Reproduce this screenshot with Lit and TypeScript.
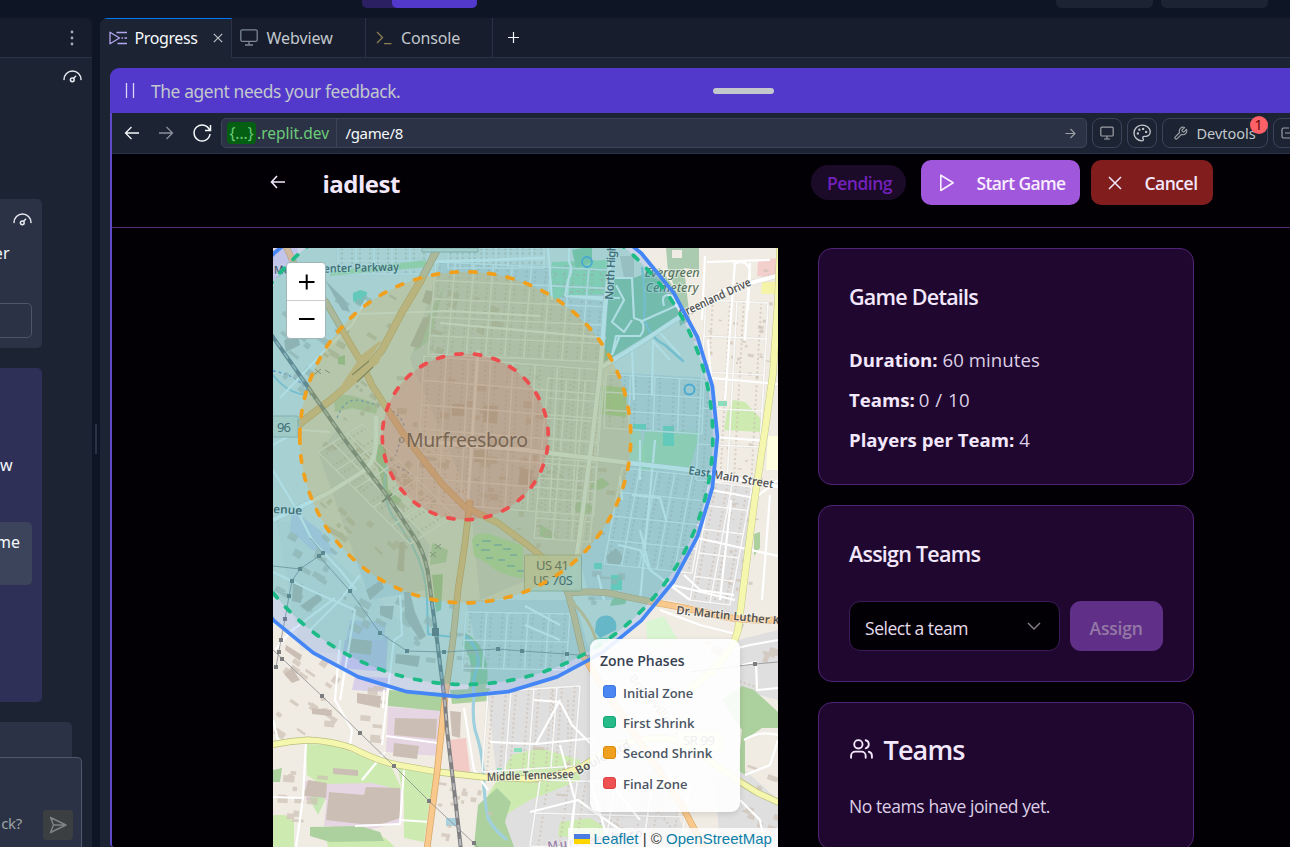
import { LitElement, html, svg, css } from "lit";
import { customElement } from "lit/decorators.js";

type Pt = [number, number];
type Grid = { o: Pt; u: Pt; v: Pt; n: number; m: number };

const rng = (seed: number) => () => {
  seed = (seed * 1664525 + 1013904223) % 4294967296;
  return seed / 4294967296;
};

/* Street blocks: origin, two edge vectors, number of streets along each. */
const grids: Grid[] = [
  { o: [436, 262], u: [172, 8], v: [-8, 92], n: 9, m: 5 },
  { o: [424, 356], u: [178, 14], v: [-8, 146], n: 8, m: 6 },
  { o: [548, 378], u: [56, 4], v: [-14, 160], n: 3, m: 8 },
  { o: [606, 374], u: [98, 6], v: [-2, 54], n: 4, m: 3 },
  { o: [622, 468], u: [88, 9], v: [-18, 96], n: 5, m: 4 },
  { o: [318, 452], u: [92, 92], v: [44, -28], n: 5, m: 3 },
  { o: [706, 300], u: [62, 3], v: [-10, 180], n: 2, m: 5 },
  { o: [712, 482], u: [40, 5], v: [-22, 118], n: 2, m: 5 },
  { o: [466, 612], u: [104, 2], v: [-4, 56], n: 5, m: 2 },
  { o: [488, 692], u: [92, -6], v: [-6, 80], n: 4, m: 1 },
  { o: [540, 780], u: [150, 4], v: [-10, 66], n: 4, m: 2 },
  { o: [338, 248], u: [90, 0], v: [0, 26], n: 5, m: 2 },
  { o: [448, 248], u: [96, 0], v: [0, 20], n: 8, m: 1 },
];

function gridPath(g: Grid) {
  let s = "";
  for (let i = 0; i <= g.n; i++) {
    const t = i / g.n;
    s += `M${g.o[0] + g.u[0] * t} ${g.o[1] + g.u[1] * t}l${g.v[0]} ${g.v[1]}`;
  }
  for (let j = 0; j <= g.m; j++) {
    const t = j / g.m;
    s += `M${g.o[0] + g.v[0] * t} ${g.o[1] + g.v[1] * t}l${g.u[0]} ${g.u[1]}`;
  }
  return s;
}

function housePath(g: Grid) {
  let s = "";
  for (let i = 0; i < g.n; i++) {
    for (const f of [0.22, 0.78]) {
      const t = (i + f) / g.n;
      s += `M${g.o[0] + g.u[0] * t} ${g.o[1] + g.u[1] * t}l${g.v[0]} ${g.v[1]}`;
    }
  }
  return s;
}

/* Scattered larger buildings: area x, y, w, h, count, size, rotation. */
const scatter: [number, number, number, number, number, number, number][] = [
  [276, 300, 60, 110, 16, 9, 38],
  [330, 290, 60, 60, 12, 7, 30],
  [425, 290, 70, 60, 12, 8, 20],
  [320, 440, 90, 110, 30, 7, 42],
  [276, 520, 70, 90, 14, 9, 30],
  [340, 590, 90, 50, 10, 10, 30],
  [276, 655, 60, 80, 16, 8, 35],
  [320, 680, 60, 60, 14, 9, 5],
  [276, 770, 50, 50, 14, 8, 4],
  [395, 370, 145, 130, 44, 8, 5],
  [340, 380, 40, 40, 8, 6, 35],
  [480, 450, 130, 100, 20, 6, 5],
  [585, 560, 60, 50, 6, 8, 4],
  [690, 260, 80, 120, 26, 4, 8],
  [720, 440, 40, 150, 22, 4, 8],
  [700, 620, 75, 40, 6, 9, 20],
  [742, 760, 36, 80, 12, 7, 20],
  [430, 780, 60, 65, 14, 6, 10],
  [516, 745, 60, 50, 8, 8, 5],
  [410, 600, 60, 70, 8, 8, 8],
];

function scatterPath() {
  const r = rng(17);
  let s = "";
  for (const [x, y, w, h, n, size, rot] of scatter) {
    const c = Math.cos((rot * Math.PI) / 180);
    const k = Math.sin((rot * Math.PI) / 180);
    for (let i = 0; i < n; i++) {
      const a = size * (0.5 + r());
      const b = size * (0.3 + r() * 0.6);
      s += `M${(x + r() * w).toFixed(1)} ${(y + r() * h).toFixed(1)}l${(a * c).toFixed(1)} ${(a * k).toFixed(1)}l${(-b * k).toFixed(1)} ${(b * c).toFixed(1)}l${(-a * c).toFixed(1)} ${(-a * k).toFixed(1)}z`;
    }
  }
  return s;
}

const initialZone = Array.from({ length: 32 }, (_, i) => {
  const a = (i * Math.PI) / 16;
  return `${(457.6 + 259.8 * Math.cos(a)).toFixed(1)},${(436.9 + 259.8 * Math.sin(a)).toFixed(1)}`;
}).join(" ");

const ring = (cx: number, cy: number, r: number) =>
  `M${cx - r} ${cy}a${r} ${r} 0 1 0 ${r * 2} 0a${r} ${r} 0 1 0 ${-r * 2} 0`;

const pylons: Pt[] = [
  [282, 659], [322, 696], [360, 733], [394, 766], [429, 801], [474, 843],
  [319, 556], [323, 553], [350, 591], [380, 633], [407, 651], [444, 652],
  [498, 649], [522, 651], [567, 654], [300, 569], [292, 581], [289, 596],
  [285, 619], [281, 640], [279, 652], [276, 667], [755, 664],
];

const US41 = "M283 240L298 272L326 302L345 335L361 362L372 385L386 407L402 432L418 453L442 484L465 507L498 523L525 543L540 555L555 572L568 593L575 620L583 655L602 686L640 742L682 806L704 847";
const NORTHWEST = "M437 250L420 282L402 312L382 350L365 370L332 399L298 425";
const CHURCH = "M470 500L465 543L458 590L453 640L445 697L437 773L427 849";
const RAIL = "M268 330L308 387L345 440L388 497L418 543Q427 560 429 580L432 603L437 640L445 703L447 730L455 797L461 850";
const MTB = "M270 745Q290 741 308 740Q332 741 352 748Q380 762 398 765L438 772L482 777L530 779Q565 775 583 766L610 748Q660 730 690 745L718 767L742 783L758 793L780 803";
const EASTSIDE = "M780 248L778 300L773 373L765 430L755 497L743 590L738 630Q733 650 715 668L690 690";
const MLK = "M568 593Q600 590 618 595L652 602L685 608L725 617Q745 621 780 620";

@customElement("zone-map")
class ZoneMap extends LitElement {
  static styles = css`
    :host {
      display: block;
      position: relative;
      width: 505px;
      height: 599px;
      overflow: hidden;
    }
    .tiles {
      display: block;
      width: 505px;
      height: 599px;
      font-family: "Noto Sans", sans-serif;
    }
    .zoom {
      position: absolute;
      left: 13px;
      top: 14px;
      width: 40px;
      height: 77px;
      box-sizing: border-box;
      background: #fff;
      border: 1px solid #9fb6b8;
      border-radius: 4px;
      display: flex;
      flex-direction: column;
    }
    .zoom svg {
      display: block;
      width: 38px;
      height: 37px;
    }
    .zoom svg + svg {
      border-top: 1px solid #ccc;
    }
    .legend {
      position: absolute;
      left: 317px;
      top: 391px;
      width: 150px;
      height: 173px;
      box-sizing: border-box;
      padding: 10px 10px;
      border-radius: 9px;
      background: rgba(255, 255, 255, 0.9);
      box-shadow: 0 2px 6px rgba(0, 0, 0, 0.12);
      font-family: "Open Sans", sans-serif;
      color: #4b5563;
    }
    .head {
      font-size: 14px;
      line-height: 24px;
      font-weight: 600;
      color: #374151;
      white-space: nowrap;
    }
    .row {
      display: flex;
      align-items: center;
      gap: 7.5px;
      height: 30.4px;
      padding-left: 3px;
      font-size: 13px;
      font-weight: 600;
      white-space: nowrap;
    }
    .row i {
      margin-bottom: 2px;
    }
    .rows {
      padding-top: 4.5px;
    }
    .sw {
      width: 12.5px;
      height: 12.5px;
      box-sizing: border-box;
      border: 1px solid;
      border-radius: 3px;
    }
    .blue { background: #4a87f2; border-color: #3b76e4; }
    .green { background: #25ba87; border-color: #12a674; }
    .amber { background: #efa01f; border-color: #d98b0c; }
    .red { background: #ee5152; border-color: #dd3f40; }
    .credit {
      position: absolute;
      right: 0;
      bottom: 0;
      width: 210.5px;
      height: 19px;
      padding: 2px 0 0 6.5px;
      box-sizing: border-box;
      background: rgba(255, 255, 255, 0.8);
      display: flex;
      align-items: center;
      font: 15px/17px "Liberation Sans", Arial, sans-serif;
      color: #333;
      white-space: pre;
    }
    .credit svg {
      width: 16px;
      height: 10px;
      margin-right: 3.5px;
      flex: none;
    }
    .link { color: #0e7fa8; }
  `;

  private map() {
    return svg`
      <g>
        <rect x="273" y="248" width="506" height="599" fill="#f0ece4"></rect>
        <!-- land use -->
        <g fill="#e0dfdf">
          <path d="M440 262L612 268L602 372L576 560L480 600L470 500L410 360z"></path>
          <path d="M608 372L712 378L718 480L690 600L590 600L580 560z"></path>
          <path d="M716 480L757 490L742 620L690 605L650 595z"></path>
          <path d="M466 600L575 600L600 690L660 760L690 850L505 850L488 700z"></path>
          <path d="M738 640L778 630V700L740 690zM745 770L778 800V847H720L715 780z"></path>
          <path d="M318 452L337 430L430 545L425 590L370 600z"></path>
          <path d="M276 520L300 525L420 640L400 660L300 650z" opacity=".4"></path>
        </g>
        <g fill="#e6d6e3">
          <path d="M388 707L442 710L438 756L386 752z"></path>
          <path d="M329 775L372 780L402 790L402 822L368 830L324 826z"></path>
          <path d="M345 640L388 636L386 672L340 668zM355 676L388 678L386 692L352 690z" fill="#d8cfe8"></path>
          <path d="M292 510L320 530L336 555L312 550L290 530z" fill="#dcd8ea"></path>
          <path d="M350 620L386 622L384 640L346 640z" fill="#dad6ea"></path>
          <path d="M304 781L330 781L328 800L306 800z"></path>
          <path d="M273 248H298L296 268L273 280z" fill="#e3d6e6"></path>
        </g>
        <path d="M448 740L466 738L470 772L450 774z" fill="#f3cbc6"></path>
        <path d="M758 260L779 258V278L757 276z" fill="#f3cfcc"></path>
        <path d="M646 622L664 616L678 640L648 650z" fill="#d9f5d2"></path>
        <path d="M762 282H779V294H761z" fill="#f4f3a8"></path>
        <path d="M768 436H779V470H766z" fill="#ffffe0"></path>
        <!-- green areas -->
        <g fill="#cdebb0">
          <path d="M600 385L627 388L626 417L599 414z" fill="#b9dc98"></path>
          <path d="M727 412L733 400L745 402L762 420L760 432L724 430z"></path>
          <path d="M306 744L330 745L352 752L370 760L392 768L402 790L372 783L320 784L307 775z"></path>
          <path d="M398 768L436 775L430 800L424 842L404 838L404 800z"></path>
          <path d="M273 815L285 815L294 822L294 847H273z"></path>
          <path d="M326 838L350 828L385 838L395 847H328z"></path>
          <path d="M512 755L540 748L580 760L580 780L530 800L505 815L488 795z"></path>
          <path d="M560 822L590 818L606 828L600 840L558 836z"></path>
          <path d="M315 784L325 800L318 815L310 800zM645 430L700 432L690 468L640 470z" fill="#c5e8b4"></path>
          <path d="M630 430L640 428L646 466L630 462z" opacity=".7"></path>
        </g>
        <g fill="#add19e">
          <path d="M388 690L444 693L441 711L388 706z"></path>
          <path d="M450 690L490 688L488 701L452 704z"></path>
          <path d="M310 827L360 826L380 832L384 841L330 842L310 836z"></path>
          <path d="M478 805L497 788L511 802L505 822L514 847H474z"></path>
          <path d="M742 686L754 690L778 712V728L762 728L745 740V775L738 770L742 730L722 700z"></path>
          <path d="M465 633Q480 640 486 660Q492 690 476 700L468 690Q476 660 462 645z"></path>
          <path d="M378 440L386 450L388 490L402 500L396 506L384 490L376 460z"></path>
          <path d="M432 575L443 574L441 610L436 612z"></path>
          <path d="M432 543L448 550L446 562L430 565z" opacity=".7"></path>
          <path d="M580 500L596 508L584 516L572 508z" opacity=".7"></path>
          <path d="M592 482L602 478L610 484L600 490L590 488z" opacity=".8"></path>
          <path d="M540 524L556 534L552 540L540 536z" opacity=".7"></path>
          <path d="M334 398Q345 392 360 398L378 404L376 414L352 408L335 412z" opacity=".6"></path>
          <path d="M338 357L345 355L345 365L338 364z"></path>
          <path d="M754 534L760 532L760 548L754 556z"></path>
          <path d="M273 770L282 768L280 782L273 782z"></path>
          <path d="M444 287L430 340L414 352L420 330z" opacity=".5"></path>
          <path d="M612 600L620 592L628 596L625 604L610 606z"></path>
        </g>
        <path d="M472 540Q476 531 490 534L523 546V578Q500 576 488 564L474 556z" fill="#c0eab2"></path>
        <path d="M482 541h9M476 545h3M494 545h8M503 549h8M481 550h9M510 555h7M486 558h7M498 560h7M507 566h8M517 571h7" stroke="#4f9fd0" stroke-width="1" fill="none"></path>
        <!-- park and cemetery -->
        <path d="M552 262L608 260L608 294L566 296L551 300L548 290z" fill="#b4e8b4"></path>
        <path d="M572 250L592 246L592 262L576 268z" fill="#9fd6a4"></path>
        <path d="M615 278L634 278L660 268L672 285L684 300L676 318L604 362L608 300z" fill="#a0cba8"></path>
        <path d="M666 248H699V270L684 268L690 320L680 326L676 290L668 272z" fill="#aacbaf"></path>
        <path d="M672 250h10v8h-10z" fill="#f0ece4"></path>
        <g stroke="#e2a5a5" stroke-width="1" fill="none" stroke-dasharray="3 4" opacity=".8">
          <path d="M555 275h40M556 284l30 3M570 292l36-3M558 268l20-5M600 272l4 20"></path>
        </g>
        <g fill="#88e0be">
          <path d="M663 426h11v20h-11zM353 293L360 290L367 292L366 302L360 305L353 301zM594 563h8v6h-8zM611 575h11v15h-11zM718 401h9v5h-9zM633 424h13v7h-13zM514 748h8v4h-8zM596 638h12v5h-12zM497 768h5v4h-5z"></path>
        </g>
        <path d="M596 622Q600 614 610 616Q618 620 616 630L600 638L595 632z" fill="#8cc5d2"></path>
        <!-- water -->
        <g fill="none" stroke="#a0d0de" stroke-linecap="round">
          <path d="M465 636Q480 648 478 665Q472 680 474 697Q472 715 475 730Q482 750 483 770Q484 800 488 818Q494 830 506 839" stroke-width="3.2"></path>
          <path d="M386 466L384 490Q388 512 396 520L412 545Q426 570 427 600L428 634L452 637" stroke-width="2"></path>
          <path d="M642 268Q646 300 644 318Q650 338 665 345L683 361" stroke-width="2.4"></path>
          <path d="M273 375Q286 392 305 395" stroke-width="1.6"></path>
        </g>
        <path d="M273 371Q292 374 303 385Q315 400 325 412M337 418Q345 396 362 401L385 407Q402 415 404 426L396 455Q385 462 400 468L414 476" fill="none" stroke="#6e97d8" stroke-width="1.3" stroke-dasharray="2.5 3"></path>
        <path d="M446 818h12v8h-12z" fill="#a9d0de"></path>
        <!-- houses -->
        <g fill="none" stroke="#cbbdb0" stroke-width="2" stroke-dasharray="2 2.6" opacity=".6">
          ${grids.map((g) => svg`<path d=${housePath(g)}></path>`)}
          <path d="M553 690V740M568 700V740M650 800l30 40M610 820l30 20M735 680l30 10"></path>
        </g>
        <path d=${scatterPath()} fill="#cdc0b4" opacity=".7"></path>
        <g fill="#cbbfb5">
          <path d="M395 718L437 719L436 739L394 735zM394 743L419 746L417 759L393 756zM357 693L381 696L380 708L357 703zM450 711L461 712L460 738L452 736z"></path>
          <path d="M329 792L364 795L366 787L400 788L400 818L382 824L360 824L326 820z"></path>
          <path d="M312 708L332 710L331 716L312 714zM333 768L358 770L358 776L333 774zM308 780L327 783L326 798L304 796z"></path>
          <path d="M348 638L372 641L371 655L347 652zM396 654L420 656L418 667L395 663zM404 592L410 592L415 612L426 636L420 640L405 618z"></path>
          <path d="M366 590L381 580L384 588L370 600zM300 606L320 592L322 600L308 612zM293 583L303 584L301 603L292 601zM380 606L394 606L392 620L380 615z"></path>
          <path d="M423 318L431 316L420 348L410 346zM426 290L434 292L430 305L422 302zM400 542L405 542L404 572L397 570zM284 340L298 335L300 345L286 352z"></path>
          <path d="M325 280L345 300L350 312L342 310z"></path>
          <path d="M484 405L498 406L497 424L483 422zM452 404h12v12h-12zM474 450h14v12h-14zM520 468L533 470L530 488L518 486z"></path>
          <path d="M606 556L616 548L624 558L618 566L608 564zM284 674L292 668L300 680L292 683zM286 645L302 655L300 661L285 650z"></path>
          <path d="M620 256h14v22h-10z" opacity=".6"></path>
        </g>
        <!-- minor streets -->
        <g fill="none" stroke="#cfcac4" stroke-width="2.6" opacity=".4">
          ${grids.map((g) => svg`<path d=${gridPath(g)}></path>`)}
        </g>
        <g fill="none" stroke="#fff" stroke-width="1.7" opacity=".82">
          ${grids.map((g) => svg`<path d=${gridPath(g)}></path>`)}
        </g>
        <g fill="none" stroke="#fff" stroke-width="2.2" stroke-linejoin="round">
          <path d="M356 314L448 311L540 316M440 323L606 338M280 398L330 345L352 325L366 300"></path>
          <path d="M273 445L300 430L330 432M273 470L298 512L312 540L340 570L356 590"></path>
          <path d="M273 572L310 590L355 610L350 640L340 700M310 630L340 600L360 575M400 595L402 635L394 640L388 690L382 745"></path>
          <path d="M275 650L290 632L335 598M273 797L303 798L296 847M306 742L303 798M340 640L335 700L352 730L350 745L330 745"></path>
          <path d="M355 826L400 824L404 770M400 820L430 822M386 736L438 743M385 752L362 780M273 720L278 740M384 690L383 708"></path>
          <path d="M464 708L474 770L488 790M490 742L536 744L560 700M534 700L560 702L572 725L592 745M536 744L595 738"></path>
          <path d="M560 745L575 800L570 847M590 780L610 847M530 812L578 800L620 830L650 838M616 790L640 820"></path>
          <path d="M730 650L750 645L778 640M742 665L756 662L757 690L778 688M745 775L770 765L778 740M740 800L760 820L765 847M744 740Q760 730 778 735"></path>
          <path d="M640 530L650 570L690 600M684 575L700 590L734 595M672 585L735 600M660 610L700 625L740 635M640 440V480M655 440L640 600"></path>
          <path d="M705 256L702 320M735 262L731 315L725 400M750 263L745 340M707 262L770 260M733 264Q748 258 750 272L748 310"></path>
          <path d="M708 340L711 378L778 384M715 437L765 441M731 500L720 600M711 490L755 498L778 480M697 538L778 556M770 495L762 600"></path>
          <path d="M620 476L622 500M632 495L660 498L666 520M618 545L640 550L650 570M598 575L604 600M525 606L560 625M525 625L560 640"></path>
          <path d="M569 248L569 262Q574 270 568 280L565 296M565 296L606 300M570 296L620 298M548 248L552 300"></path>
          <path d="M615 278H632L634 318L642 321Q646 330 640 336H616L612 355M616 285L624 300L612 322L624 332L632 320M640 322L680 304M664 306Q660 292 672 296L680 312M612 355L620 335"></path>
          <path d="M660 333L680 355M652 340L670 360M632 350L634 400M653 340L652 395"></path>
        </g>
        <!-- larger streets -->
        <g fill="none" stroke="#cfcac4" stroke-width="5.4" opacity=".6">
          <path d="M612 248L605 307L600 373L592 440L578 547L570 600"></path>
          <path d="M602 367L642 342L675 320L725 290L780 275"></path>
          <path d="M408 440L525 450L630 463L690 470L780 487"></path>
          <path d="M273 520L298 508L330 492L362 472"></path>
        </g>
        <g fill="none" stroke="#fff" stroke-width="4.4">
          <path d="M612 248L605 307L600 373L592 440L578 547L570 600"></path>
          <path d="M602 367L642 342L675 320L725 290L780 275"></path>
          <path d="M408 440L525 450L630 463L690 470L780 487"></path>
          <path d="M478 350L468 500" stroke-width="3"></path>
          <path d="M273 520L298 508L330 492L362 472Q376 462 376 440L376 416"></path>
          <path d="M316 273L428 262L545 258" stroke-width="3"></path>
        </g>
        <path d="M330 271L426 260V267L330 276z" fill="#c8e8a8"></path>
        <!-- arterials -->
        <g fill="none" stroke-linejoin="round">
          <g stroke="#b8bf7e">
            <path d=${MTB} stroke-width="6.8"></path>
            <path d=${EASTSIDE} stroke-width="7.2"></path>
          </g>
          <g stroke="#f6f7ae">
            <path d=${MTB} stroke-width="5.4"></path>
            <path d=${EASTSIDE} stroke-width="6.4"></path>
          </g>
          <g stroke="#d6a566">
            <path d=${US41} stroke-width="6.6"></path>
            <path d=${NORTHWEST} stroke-width="7.6"></path>
            <path d=${CHURCH} stroke-width="6.6"></path>
            <path d=${MLK} stroke-width="6.8"></path>
          </g>
          <g stroke="#f8c88c">
            <path d=${US41} stroke-width="5.4"></path>
            <path d=${NORTHWEST} stroke-width="6.4"></path>
            <path d=${CHURCH} stroke-width="5.2"></path>
            <path d=${MLK} stroke-width="5.6"></path>
            <path d="M388 336L376 362L366 373L345 385L330 400L344 392L378 362zM338 392L366 362L380 342L362 356z" fill="#f8c88c" stroke-width="2"></path>
          </g>
          <path d="M568 593L575 605Q590 620 596 640" stroke="#f8c88c" stroke-width="3"></path>
          <path d="M352 375L369 361M357 382L373 367" stroke="#8b7550" stroke-width="1.2"></path>
        </g>
        <!-- railway -->
        <g fill="none">
          <path d=${RAIL} stroke="#808083" stroke-width="4"></path>
          <path d=${RAIL} stroke="#b9b9b9" stroke-width="2" stroke-dasharray="7 7"></path>
          <path d="M382 502L392 494" stroke="#777" stroke-width="2"></path>
          <path d="M432 628h7v8h-7z" fill="#777"></path>
        </g>
        <!-- power lines -->
        <g fill="none" stroke="#8a8a8c" stroke-width=".9" opacity=".85">
          <path d="M273 650L322 696L360 733L394 766L429 801L478 847M300 569L319 556L350 591L380 633L407 651L444 652L498 649L522 651L567 654L590 656"></path>
          <path d="M319 556L323 553L310 538M273 566L300 569L292 581L289 596L285 619L281 640L276 667M690 672L755 664L778 662"></path>
        </g>
        <g fill="#7a7c7e">
          ${pylons.map(([x, y]) => svg`<rect x=${x - 2} y=${y - 2} width="4" height="4"></rect>`)}
        </g>
        <path d="M315 369l6 5m0-5l-6 5M435 544l6 5m0-5l-6 5M430 552l6 5m0-5l-6 5M325 370l5 3" stroke="#888" stroke-width="1" fill="none"></path>
        <g fill="none" stroke="#5db0e0" stroke-width="1.8">
          <circle cx="587" cy="262" r="5"></circle>
          <circle cx="689.500" cy="389.500" r="5"></circle>
        </g>
        <!-- labels -->
        <g fill="#555" stroke="#fff" stroke-opacity=".5" stroke-width="2" paint-order="stroke" font-size="11.600" font-weight="600">
          <text transform="translate(274 274) rotate(-1.500)" textLength="125" lengthAdjust="spacingAndGlyphs">Medical Center Parkway</text>
          <text transform="translate(613 300) rotate(-87)" textLength="56">North High</text>
          <text transform="translate(681 318) rotate(-25)" textLength="78" lengthAdjust="spacingAndGlyphs">Greenland Drive</text>
          <text transform="translate(688 474) rotate(9.500)" textLength="86" lengthAdjust="spacingAndGlyphs">East Main Street</text>
          <text transform="translate(676 614) rotate(6)" textLength="104" lengthAdjust="spacingAndGlyphs">Dr. Martin Luther K</text>
          <text transform="translate(273 513) rotate(3)" textLength="29" lengthAdjust="spacingAndGlyphs">enue</text>
          <text transform="translate(487 781) rotate(-2)" textLength="87" lengthAdjust="spacingAndGlyphs">Middle Tennessee</text>
          <text transform="translate(578 775) rotate(-28)" textLength="60">Boulevard</text>
          <text transform="translate(628 678) rotate(50)" textLength="90" opacity=".5" lengthAdjust="spacingAndGlyphs">Bradyville Pike</text>
          <text transform="translate(548 850) rotate(-8)" textLength="96" fill="#8a6d9c" opacity=".8">Murfreesboro</text>
          <g font-style="italic" font-weight="500" fill="#5b7560" font-size="12.500">
            <text x="644.500" y="277" textLength="55">Evergreen</text>
            <text x="645.500" y="292" textLength="53">Cemetery</text>
          </g>
        </g>
        <g font-size="13" fill="#555">
          <path d="M422 248h56v4h-56z" fill="#e9e6d4" stroke="#b5b5a5"></path>
          <rect x="266" y="416" width="32" height="21" rx="1" fill="#e5e3cf" stroke="#b5b5a5" opacity=".9"></rect>
          <text x="277" y="431.500" textLength="14">96</text>
          <rect x="524.500" y="555" width="57" height="36" rx="1" fill="#eee0b4" stroke="#b5b08a" opacity=".85"></rect>
          <text x="536" y="570" textLength="33">US 41</text>
          <text x="533" y="585" textLength="40">US 70S</text>
          <rect x="677" y="730" width="45" height="21" fill="#f1efd5" stroke="#ccc"></rect>
          <text x="683" y="745" textLength="32">SR 99</text>
        </g>
        <text x="406" y="447" font-size="19.500" textLength="122" fill="#3c3c3c" stroke="#fff" stroke-opacity=".35" stroke-width="2" paint-order="stroke">Murfreesboro</text>
        <circle cx="401.500" cy="440" r="2.500" fill="none" stroke="#777"></circle>
        <!-- play zones -->
        <g fill-opacity=".2" stroke-width="3.750" stroke-linecap="round" stroke-linejoin="round">
          <polygon points=${initialZone} fill="#3b82f6" stroke="#4486f5"></polygon>
          <g stroke-dasharray="6.25 12.5">
            <path d=${ring(465.3, 437, 247.5)} fill="#10b981" stroke="#1dbb87"></path>
            <path d=${ring(465.3, 437.3, 165.5)} fill="#f59e0b" stroke="#f0a01c"></path>
            <path d=${ring(465.3, 436.7, 83)} fill="#ef4444" stroke="#ee4d4d"></path>
          </g>
        </g>
      </g>
    `;
  }

  render() {
    return html`
      <svg class="tiles" viewBox="273 248 505 599">${this.map()}</svg>
      <div class="zoom">
        <svg viewBox="0 0 38 37"><path d="M12 19h15.500M19.700 11.500v15" stroke="#000" stroke-width="2"></path></svg>
        <svg viewBox="0 0 38 37"><path d="M12 18h15.500" stroke="#000" stroke-width="2"></path></svg>
      </div>
      <div class="legend">
        <div class="head">Zone Phases</div>
        <div class="rows">
          <div class="row"><i class="sw blue"></i><span>Initial Zone</span></div>
          <div class="row"><i class="sw green"></i><span>First Shrink</span></div>
          <div class="row"><i class="sw amber"></i><span>Second Shrink</span></div>
          <div class="row"><i class="sw red"></i><span>Final Zone</span></div>
        </div>
      </div>
      <div class="credit">
        <svg viewBox="0 0 16 10"><path d="M0 0h16v5H0z" fill="#4c7be1"></path><path d="M0 5h16v5H0z" fill="#ffd500"></path></svg><span class="link">Leaflet</span><span> | © </span><span class="link">OpenStreetMap</span>
      </div>
    `;
  }
}

const gauge = html`<svg width="19" height="14" viewBox="0 0 19 14" fill="none" stroke="#e6e9ee" stroke-width="1.500" stroke-linecap="round"><path d="M1 9.500A8.300 8.300 0 0 1 18 9.500"></path><circle cx="9.300" cy="9.800" r="1.900"></circle><path d="M10.600 8.300L12.600 6.200"></path></svg>`;

@customElement("app-root")
class AppRoot extends LitElement {
  static styles = css`
    :host {
      display: block;
      width: 1290px;
      height: 847px;
      overflow: hidden;
      background: #0e1525;
      color: #f5f9fc;
      font-family: "Noto Sans", sans-serif;
      font-size: 16px;
    }
    * { box-sizing: border-box; }
    svg { display: block; flex: none; }
    span { white-space: nowrap; }
    .top {
      height: 18px;
      display: flex;
      align-items: flex-start;
      padding-left: 362px;
    }
    .seg { width: 115px; height: 8px; background: #2a2062; border-radius: 0 0 5px 5px; padding-left: 30px; }
    .seg i { display: block; height: 8px; background: #5239cc; border-radius: 0 0 5px 5px; }
    .pill { height: 8px; background: #1c2333; border-radius: 0 0 5px 5px; }
    .p1 { width: 97px; margin-left: 579px; }
    .p2 { width: 107px; margin-left: 8px; }
    .body { display: flex; height: 829px; }

    .chat {
      width: 92px;
      background: #1c2333;
      border-radius: 0 8px 0 0;
      overflow: hidden;
      display: flex;
      flex-direction: column;
    }
    .chathead {
      height: 40px;
      flex: none;
      background: #171d2c;
      border-bottom: 1px solid #2b3245;
      display: flex;
      justify-content: flex-end;
      padding: 12px 18px 0 0;
    }
    .gaugebox { height: 141px; flex: none; display: flex; justify-content: flex-end; padding: 12px 10.5px 0 0; }
    .card1 {
      width: 42px; height: 149px; flex: none; background: #2b3245; border-radius: 0 5px 5px 0;
      display: flex; flex-direction: column; align-items: flex-end; padding-top: 14px; padding-right: 10.5px;
    }
    .card1 .er { margin: 12px 22px 0 0; line-height: 28px; }
    .field { width: 32px; height: 35px; border: 1px solid #4e5569; border-left: 0; border-radius: 0 5px 5px 0; margin-top: 36px; margin-right: -0.5px; }
    .card2 {
      width: 42px; height: 334px; flex: none; margin-top: 20px; background: #2f3057; border-radius: 0 5px 5px 0;
      display: flex; flex-direction: column; align-items: flex-start; padding-top: 83px;
    }
    .card2 .w { width: 12.5px; display: flex; justify-content: flex-end; line-height: 28px; }
    .quote { width: 32px; height: 63px; background: #3c445c; border-radius: 0 5px 5px 0; margin-top: 43px; display: flex; justify-content: flex-end; padding: 6px 12px 0 0; line-height: 28px; }
    .card3 { width: 72px; height: 35px; flex: none; margin-top: 20px; background: #2b3245; border-radius: 0 5px 0 0; }
    .compose {
      width: 82px; height: 92px; flex: none; background: #2b3245; border: 1px solid #51586b; border-width: 1px 1px 0 0;
      border-radius: 0 5px 0 0; display: flex; justify-content: flex-end; align-items: flex-start; gap: 21px; padding: 52px 8px 0 0;
    }
    .compose span { color: #9da2a6; font-size: 15px; line-height: 27px; letter-spacing: -0.3px; }
    .send { width: 30px; height: 30px; border-radius: 4px; background: #3c3f41; display: grid; place-items: center; flex: none; }

    .gutter { width: 8px; display: flex; align-items: center; padding: 12px 0 0 3px; }
    .gutter i { width: 2px; height: 30px; background: #2b3245; }

    .pane {
      width: 1190px;
      background: #1c2333;
      border-radius: 8px 0 0 0;
      overflow: hidden;
      display: flex;
      flex-direction: column;
    }
    .tabs { height: 40px; flex: none; display: flex; background: #171d2c; }
    .tab { height: 40px; display: flex; align-items: center; border-right: 1px solid #2b3245; border-bottom: 1px solid #2b3245; color: #c2c8cc; }
    .active { width: 132px; background: #1c2333; border-top: 1px solid #0079f2; border-bottom: 0; color: #f5f9fc; padding: 0 0 1px 9px; }
    .tab2 { width: 134px; padding-left: 8px; }
    .tab3 { width: 127px; padding-left: 10px; }
    .tab4 { flex: 1; border-right: 0; padding-left: 15px; }
    .active span { width: 63px; margin: 0 15.5px 0 6.5px; letter-spacing: -0.4px; }
    .tab2 span { margin-left: 8.5px; letter-spacing: -0.05px; }
    .tab3 span { margin-left: 9px; letter-spacing: -0.17px; }

    .frame { margin: 10px 0 0 10px; height: 779px; flex: none; display: flex; flex-direction: column; }
    .banner {
      height: 45px; flex: none; background: #5239cc; border-radius: 9px 0 0 0; display: flex; align-items: center;
      color: #c2c8cc; font-size: 17.4px; padding-left: 15px;
    }
    .banner span { margin-left: 16px; width: 249px; letter-spacing: -0.4px; }
    .grip { width: 61px; height: 6px; border-radius: 3px; background: #c2c8cc; margin-left: 312.5px; }
    .web { height: 734px; border-left: 2px solid #5f4bc9; display: flex; flex-direction: column; border-radius: 0 0 0 4px; overflow: hidden; }
    .bar { height: 41px; flex: none; background: #1c2333; border-bottom: 1px solid #2b3245; display: flex; align-items: center; padding-left: 10.5px; width: 1200px; }
    .bar > svg { margin-right: 16px; }
    .bar > .fwd { margin-right: 17px; }
    .url {
      width: 866px; height: 30px; flex: none; background: #2b3245; border: 1px solid #3c445c; border-radius: 5px;
      display: flex; align-items: center; font-size: 15.5px; margin-left: -7px;
    }
    .host { width: 115px; height: 28px; flex: none; border-right: 1px solid #3c445c; display: flex; align-items: center; padding-left: 5.5px; color: #6bcb77; }
    .dots { width: 29px; height: 22px; background: #045f12; border-radius: 4px; display: flex; align-items: center; justify-content: center; flex: none; }
    .host .r { margin-left: 1px; }
    .url .path { margin-left: 9px; width: 57px; font-size: 15px; letter-spacing: -0.35px; padding-bottom: 1px; }
    .url > svg { margin-left: 662px; }
    .btn { height: 30px; width: 30px; flex: none; border: 1px solid #3c445c; border-radius: 8px; display: flex; align-items: center; justify-content: center; margin-left: 5px; position: relative; color: #c2c8cc; }
    .dev { width: 106px; justify-content: flex-start; padding-left: 10.5px; font-size: 14.5px; }
    .dev span { margin-left: 8.5px; padding-bottom: 1px; }
    .badge {
      position: absolute; right: -1px; top: -3px; width: 18px; height: 18px; border-radius: 9px; background: #ff6166;
      color: #590a0c; font-size: 14px; line-height: 18px; text-align: center;
    }

    .app {
      flex: 1; background: #020005; font-family: "Open Sans", sans-serif; color: #f3e8fb;
    }
    .header { height: 74px; border-bottom: 1px solid #54297c; display: flex; align-items: center; padding: 0 0 16px 158px; }
    .header > svg { margin-bottom: 2px; }
    .title { font-size: 24px; font-weight: 700; margin-left: 36.5px; width: 77px; letter-spacing: -0.5px; padding-top: 1px; }
    .pending { width: 95px; height: 35px; border-radius: 18px; background: #1b0b29; color: #7321bb; font-size: 17.5px; font-weight: 600; letter-spacing: -0.5px; display: flex; align-items: center; padding-left: 16px; margin-left: 411.5px; padding-top: 1px; }
    .act { height: 45px; border-radius: 10px; display: flex; align-items: center; font-size: 17.5px; font-weight: 600; }
    .act span { padding-top: 1px; }
    .start { width: 159px; background: #a057dc; margin-left: 15px; padding-left: 17px; color: #f8eefe; letter-spacing: -0.64px; }
    .act span { margin-left: 20.5px; }
    .cancel { width: 122.5px; background: #811d1d; margin-left: 10.5px; padding-left: 15.5px; letter-spacing: -0.5px; }
    .main { display: flex; gap: 40px; padding: 20px 0 0 161px; }
    .side { width: 375.5px; display: flex; flex-direction: column; gap: 20px; }
    .card { border: 1px solid #4f2476; border-radius: 14px; background: #200730; padding: 32px 30px 0; }
    .c1 { height: 237px; }
    .c2 { height: 177px; }
    .c3 { height: 148px; padding-top: 30px; }
    .h { font-size: 21.5px; font-weight: 600; line-height: 32px; height: 32px; letter-spacing: -0.76px; }
    .facts { padding-top: 27px; font-size: 18.6px; line-height: 40px; color: #ddd0e6; }
    .facts b { color: #f3e8fb; font-weight: 700; }
    .facts div { display: flex; gap: 5px; }
    .facts .d { letter-spacing: 0.08px; }
    .facts .sp { letter-spacing: 0.5px; margin-left: -1px; }
    .form { display: flex; gap: 10px; padding-top: 31px; }
    .select { width: 211px; height: 50px; border: 1px solid #3a1a5a; border-radius: 11px; background: #020005; display: flex; align-items: center; justify-content: space-between; padding: 0 18px 0 15px; font-size: 17.5px; color: #e6dcec; letter-spacing: -0.47px; }
    .select span, .assign span { padding-top: 3px; }
    .assign { width: 93px; height: 50px; border-radius: 11px; background: #602f87; color: #9478a6; font-size: 17.5px; font-weight: 600; letter-spacing: -0.2px; display: flex; align-items: center; justify-content: center; }
    .big { display: flex; align-items: center; gap: 9.5px; height: 32px; font-size: 27px; font-weight: 600; letter-spacing: -0.85px; }
    .none { padding-top: 26px; font-size: 17.5px; line-height: 30px; color: #ddd0e6; letter-spacing: -0.41px; }
  `;

  render() {
    return html`
      <div class="top">
        <div class="seg"><i></i></div>
        <div class="pill p1"></div>
        <div class="pill p2"></div>
      </div>
      <div class="body">
        <div class="chat">
          <div class="chathead">
            <svg width="4" height="16" viewBox="0 0 4 16" fill="#a4abb3"><circle cx="2" cy="2" r="1.400"></circle><circle cx="2" cy="8" r="1.400"></circle><circle cx="2" cy="14" r="1.400"></circle></svg>
          </div>
          <div class="gaugebox">${gauge}</div>
          <div class="card1">${gauge}<span class="er">er</span><div class="field"></div></div>
          <div class="card2"><span class="w">w</span><div class="quote"><span>me</span></div></div>
          <div class="card3"></div>
          <div class="compose">
            <span>ck?</span>
            <div class="send"><svg width="18" height="18" viewBox="0 0 18 18" fill="none" stroke="#7f8385" stroke-width="1.400" stroke-linejoin="round"><path d="M1.500 1.500L17 9L1.500 16.500L4.500 9zM4.500 9H17"></path></svg></div>
          </div>
        </div>
        <div class="gutter"><i></i></div>
        <div class="pane">
          <div class="tabs">
            <div class="tab active">
              <svg width="19" height="14" viewBox="0 0 19 14" fill="none" stroke="#b5a6f2" stroke-width="1.300" stroke-linejoin="round"><path d="M1 1.200V12.800L10.500 7zM7.500 1.500H18M12.500 7H14M15.500 7H18M8.500 12.500H18"></path></svg>
              <span>Progress</span>
              <svg width="10" height="10" viewBox="0 0 10 10" stroke="#c2c8cc" stroke-width="1.100"><path d="M.8.800L9.200 9.200M9.200.8L.8 9.200"></path></svg>
            </div>
            <div class="tab tab2">
              <svg width="18" height="17" viewBox="0 0 18 17" fill="none" stroke="#7d8794" stroke-width="1.300"><rect x=".8" y=".8" width="16.400" height="11.600" rx="1.500"></rect><path d="M9 12.400V16M5 16H13"></path></svg>
              <span>Webview</span>
            </div>
            <div class="tab tab3">
              <svg width="16" height="14" viewBox="0 0 16 14" fill="none" stroke="#8f8052" stroke-width="1.300"><path d="M1 1L6.500 6.500L1 12M8 12.700H15.500"></path></svg>
              <span>Console</span>
            </div>
            <div class="tab tab4">
              <svg width="11" height="11" viewBox="0 0 11 11" stroke="#f5f9fc" stroke-width="1.200"><path d="M5.500 0V11M0 5.500H11"></path></svg>
            </div>
          </div>
          <div class="frame">
            <div class="banner">
              <svg width="10" height="15" viewBox="0 0 10 15" stroke="#dcd6f5" stroke-width="1.300"><path d="M1.500 0V15M8.500 0V15"></path></svg>
              <span>The agent needs your feedback.</span>
              <i class="grip"></i>
            </div>
            <div class="web">
              <div class="bar">
                <svg width="18" height="16" viewBox="0 0 18 16" fill="none" stroke="#f5f9fc" stroke-width="1.300"><path d="M8.500 2L2.500 8L8.500 14M2.500 8H16"></path></svg>
                <svg class="fwd" width="18" height="16" viewBox="0 0 18 16" fill="none" stroke="#8b919c" stroke-width="1.300"><path d="M9.500 2L15.500 8L9.500 14M15.500 8H2"></path></svg>
                <svg width="20" height="20" viewBox="0 0 20 20" fill="none" stroke="#f5f9fc" stroke-width="1.500"><path d="M17.500 7A8 8 0 1 0 18 11M18.500 2V7.500H13"></path></svg>
                <div class="url">
                  <div class="host"><span class="dots">{...}</span><span class="r">.replit.dev</span></div>
                  <span class="path">/game/8</span>
                  <svg width="11" height="11" viewBox="0 0 11 11" fill="none" stroke="#9da2a6" stroke-width="1.100"><path d="M5.500 1L10 5.500L5.500 10M10 5.500H.5"></path></svg>
                </div>
                <div class="btn"><svg width="14" height="14" viewBox="0 0 14 14" fill="none" stroke="#9da2a6" stroke-width="1.200"><rect x=".8" y="1.200" width="12.400" height="8.800" rx="1"></rect><path d="M7 10V13M4 13H10"></path></svg></div>
                <div class="btn"><svg width="18" height="18" viewBox="0 0 24 24" fill="none" stroke="#c2c8cc" stroke-width="1.800" stroke-linejoin="round"><circle cx="13.500" cy="6.500" r=".7"></circle><circle cx="17.500" cy="10.500" r=".7"></circle><circle cx="8.500" cy="7.500" r=".7"></circle><circle cx="6.500" cy="12.500" r=".7"></circle><path d="M12 1.500C6 1.500 1.300 6.200 1.300 12S6 22.500 12 22.500c1.100 0 1.900-.8 1.900-1.900 0-.5-.2-.9-.5-1.200-.3-.3-.4-.7-.4-1.200a1.800 1.800 0 0 1 1.800-1.800h2.200c3.300 0 6-2.700 6-6C23 5.300 18 1.500 12 1.500z"></path></svg></div>
                <div class="btn dev">
                  <svg width="15" height="15" viewBox="0 0 24 24" fill="none" stroke="#9da2a6" stroke-width="1.900" stroke-linejoin="round"><path d="M14.700 6.300a1 1 0 0 0 0 1.400l1.600 1.600a1 1 0 0 0 1.400 0l3.800-3.800a6 6 0 0 1-7.900 7.900l-6.900 6.900a2.100 2.100 0 0 1-3-3l6.900-6.900a6 6 0 0 1 7.900-7.900z"></path></svg>
                  <span>Devtools</span>
                  <div class="badge">1</div>
                </div>
                <div class="btn"><svg width="13" height="12" viewBox="0 0 13 12" fill="none" stroke="#9da2a6" stroke-width="1.200"><path d="M8 1H2.500A1.500 1.500 0 0 0 1 2.500V9.500A1.500 1.500 0 0 0 2.500 11H10M4 6H10"></path></svg></div>
              </div>
              <div class="app">
                <div class="header">
                  <svg width="16" height="14" viewBox="0 0 16 14" fill="none" stroke="#f3e8fb" stroke-width="1.600"><path d="M7 1L1.500 7L7 13M1.500 7H15"></path></svg>
                  <span class="title">iadlest</span>
                  <div class="pending"><span>Pending</span></div>
                  <div class="act start">
                    <svg width="18" height="18" viewBox="0 0 18 18" fill="none" stroke="#f8eefe" stroke-width="1.600" stroke-linejoin="round"><path d="M2.800 1.200V16.500L15.200 8.800z"></path></svg>
                    <span>Start Game</span>
                  </div>
                  <div class="act cancel">
                    <svg width="18" height="18" viewBox="0 0 18 18" stroke="#f3e8fb" stroke-width="1.500"><path d="M3 3L15 15M15 3L3 15"></path></svg>
                    <span>Cancel</span>
                  </div>
                </div>
                <div class="main">
                  <zone-map></zone-map>
                  <div class="side">
                    <div class="card c1">
                      <div class="h">Game Details</div>
                      <div class="facts">
                        <div><b>Duration:</b><span class="d">60 minutes</span></div>
                        <div><b>Teams:</b><span class="sp">0 / 10</span></div>
                        <div><b>Players per Team:</b><span>4</span></div>
                      </div>
                    </div>
                    <div class="card c2">
                      <div class="h">Assign Teams</div>
                      <div class="form">
                        <div class="select"><span>Select a team</span><svg width="14" height="8" viewBox="0 0 14 8" fill="none" stroke="#8a8090" stroke-width="1.400"><path d="M1 1L7 7L13 1"></path></svg></div>
                        <div class="assign"><span>Assign</span></div>
                      </div>
                    </div>
                    <div class="card c3">
                      <div class="big">
                        <svg width="25" height="25" viewBox="0 0 24 24" fill="none" stroke="#f3e8fb" stroke-width="1.800" stroke-linecap="round"><path d="M16 20v-2a4 4 0 0 0-4-4H6a4 4 0 0 0-4 4v2"></path><circle cx="9" cy="7" r="4"></circle><path d="M22 20v-2a4 4 0 0 0-3-3.870M16 3.130a4 4 0 0 1 0 7.750"></path></svg>
                        <span>Teams</span>
                      </div>
                      <div class="none">No teams have joined yet.</div>
                    </div>
                  </div>
                </div>
              </div>
            </div>
          </div>
        </div>
      </div>
    `;
  }
}
